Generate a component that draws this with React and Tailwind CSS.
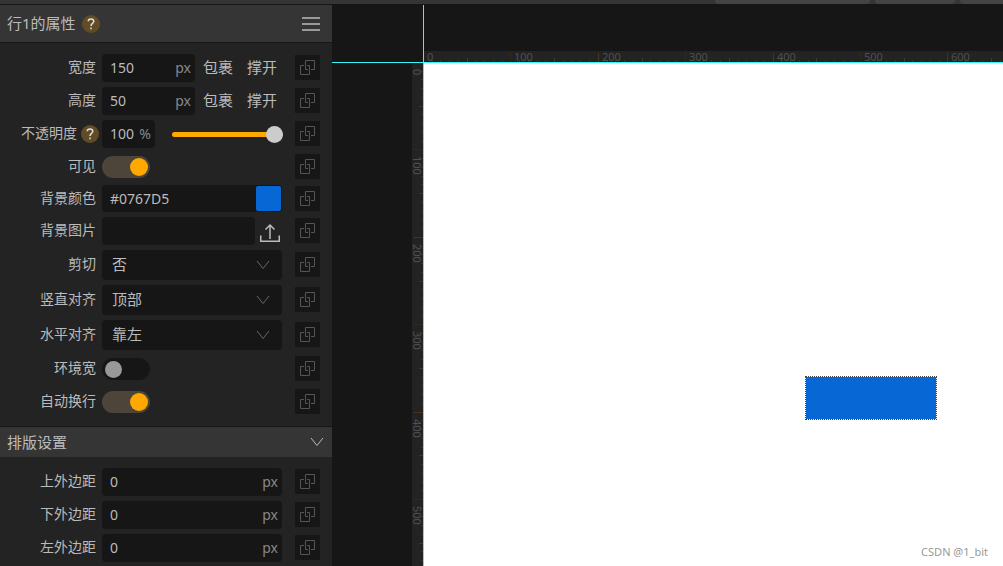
import { useState } from 'react'
import clsx from 'clsx'

const RULER_STEP = 87.4

const RULER_TICKS = Array.from({ length: 70 }, (_, i) => i + 1)

const MARGINS = [
  { id: 'margin-top', label: '上外边距' },
  { id: 'margin-bottom', label: '下外边距' },
  { id: 'margin-left', label: '左外边距' }
]

function LinkButton({ label, className = 'ml-[13px]' }) {
  return (
    <button type="button" aria-label={`${label} 绑定`} className={clsx('mb-px size-[25px] shrink-0 bg-[#161616]', className)}>
      <svg width="25" height="25" viewBox="0 0 25 25" fill="none" stroke="#555" aria-hidden="true">
        <path d="M13 14.5H10.5V5.5H19.5V14.5H16" />
        <path d="M9 10.5H5.5V19.5H14.5V10.5H12" />
      </svg>
    </button>
  )
}

function Chevron({ className }) {
  return (
    <svg width="14" height="10" viewBox="0 0 14 10" fill="none" stroke="currentColor" className={className} aria-hidden="true">
      <path d="M1 1L7 8.500L13 1" />
    </svg>
  )
}

function Help() {
  return (
    <button
      type="button"
      aria-label="帮助"
      className="flex size-[18px] shrink-0 items-center justify-center rounded-full bg-[#624c26]"
    >
      <svg width="18" height="18" viewBox="0 0 18 18" fill="none" stroke="#ddd" strokeWidth="1.5" aria-hidden="true">
        <path d="M6.200 6.300C6.200 4.800 7.400 3.900 9 3.900C10.700 3.900 11.800 4.900 11.800 6.300C11.800 8.400 9 8.500 9 11" />
        <path d="M9 12.500V14.200" />
      </svg>
    </button>
  )
}

function Row({ id, label, className = 'h-7', children }) {
  return (
    <div className={clsx('flex items-center pr-3', className)}>
      <label htmlFor={id} className="w-24 shrink-0 pb-0.5 text-right text-sm leading-5">
        {label}
      </label>
      <div className="ml-1.5 flex h-full min-w-0 flex-1 items-center">{children}</div>
      <LinkButton label={label} />
    </div>
  )
}

function Field({ id, unit, value, className }) {
  return (
    <div className={clsx('flex h-full items-center rounded bg-[#161616] pr-1 pl-2', className)}>
      <input
        id={id}
        type="text"
        defaultValue={value}
        className="w-full min-w-0 flex-1 bg-transparent text-sm text-[#bbb] outline-none"
      />
      {unit && <span className="text-sm text-[#888]">{unit}</span>}
    </div>
  )
}

function Select({ id, options }) {
  return (
    <div className="relative h-full w-full">
      <select
        id={id}
        className="h-full w-full appearance-none rounded bg-[#161616] px-2.5 pb-0.5 text-[15px] text-[#bbb] outline-none"
      >
        {options.map((o) => (
          <option key={o}>{o}</option>
        ))}
      </select>
      <Chevron className="pointer-events-none absolute top-2.5 right-3 text-[#666]" />
    </div>
  )
}

function Toggle({ id, on }) {
  const [checked, setChecked] = useState(on)
  return (
    <input
      id={id}
      type="checkbox"
      role="switch"
      checked={checked}
      onChange={(e) => setChecked(e.target.checked)}
      className="flex h-[22px] w-12 appearance-none items-center rounded-full bg-[#161616] px-[3px] before:size-[17px] before:rounded-full before:bg-[#999] checked:justify-end checked:bg-[#4d4539] checked:px-0.5 checked:before:size-[18px] checked:before:bg-[#ffa800]"
    />
  )
}

function SizeRow({ id, label, value }) {
  return (
    <Row id={id} label={label}>
      <Field id={id} value={value} unit="px" className="w-[93px]" />
      <button type="button" className="ml-2 pb-0.5 text-[15px]">包裹</button>
      <button type="button" className="ml-3.5 pb-0.5 text-[15px]">撑开</button>
    </Row>
  )
}

function PropertyPanel() {
  return (
    <aside className="w-[332px] shrink-0 bg-[#232323]">
      <header className="flex h-[38px] items-center border-b border-[#161616] bg-[#353535] pr-3 pl-[7px]">
        <h2 className="mr-1.5 text-[15px]">行1的属性</h2>
        <Help />
        <button type="button" aria-label="菜单" className="ml-auto flex w-[18px] flex-col gap-1">
          <span className="h-0.5 w-full bg-[#999]" />
          <span className="h-0.5 w-full bg-[#999]" />
          <span className="h-0.5 w-full bg-[#999]" />
        </button>
      </header>

      <div className="flex flex-col gap-[5px] pt-[11px] pb-2.5">
        <SizeRow id="width" label="宽度" value="150" />
        <SizeRow id="height" label="高度" value="50" />
        <div className="flex h-7 items-center pr-3">
          <label htmlFor="opacity" className="w-[77px] shrink-0 pb-0.5 text-right text-sm leading-5">不透明度</label>
          <div className="ml-1">
            <Help />
          </div>
          <Field id="opacity" value="100" unit="%" className="ml-[3px] w-[53px]" />
          <input
            type="range"
            aria-label="不透明度"
            defaultValue="100"
            className="ml-[17px] h-[17px] min-w-0 flex-1 appearance-none bg-transparent [&::-webkit-slider-runnable-track]:h-[5px] [&::-webkit-slider-runnable-track]:rounded-full [&::-webkit-slider-runnable-track]:bg-[#ffa800] [&::-webkit-slider-thumb]:-mt-1.5 [&::-webkit-slider-thumb]:size-[17px] [&::-webkit-slider-thumb]:appearance-none [&::-webkit-slider-thumb]:rounded-full [&::-webkit-slider-thumb]:bg-[#ccc]"
          />
          <LinkButton label="不透明度" className="ml-3" />
        </div>
        <Row id="visible" label="可见" className="h-[27px]">
          <Toggle id="visible" on />
        </Row>
        <Row id="bg-color" label="背景颜色" className="h-[27px]">
          <div className="flex h-full w-full items-center rounded bg-[#161616] pr-px">
            <Field id="bg-color" value="#0767D5" className="min-w-0 flex-1" />
            <input
              type="color"
              aria-label="选择颜色"
              defaultValue="#0767d5"
              className="size-[25px] shrink-0 appearance-none [&::-webkit-color-swatch]:rounded-xs [&::-webkit-color-swatch]:border-0 [&::-webkit-color-swatch-wrapper]:p-0"
            />
          </div>
        </Row>
        <Row id="bg-image" label="背景图片">
          <Field id="bg-image" value="" className="min-w-0 flex-1" />
          <button type="button" aria-label="上传图片" className="mt-1 mr-0.5 ml-[5px]">
            <svg width="20" height="20" viewBox="0 0 20 20" fill="none" stroke="#bbb" strokeWidth="1.5">
              <path d="M0.750 12.500V18.250H19.250V12.500" />
              <path d="M10 16V2M5.500 6.500L10 2L14.500 6.500" />
            </svg>
          </button>
        </Row>
        <Row id="clip" label="剪切" className="h-[30px]">
          <Select id="clip" options={['否', '是']} />
        </Row>
        <Row id="v-align" label="竖直对齐" className="h-[30px]">
          <Select id="v-align" options={['顶部', '居中', '底部']} />
        </Row>
        <Row id="h-align" label="水平对齐" className="h-[30px]">
          <Select id="h-align" options={['靠左', '居中', '靠右']} />
        </Row>
        <Row id="env-width" label="环境宽">
          <Toggle id="env-width" on={false} />
        </Row>
        <Row id="auto-wrap" label="自动换行">
          <Toggle id="auto-wrap" on />
        </Row>
      </div>

      <button
        type="button"
        className="flex h-8 w-full items-center justify-between border-y border-t-[#161616] border-b-[#232323] bg-[#353535] pr-2 pl-[7px] text-[15px]"
      >
        排版设置
        <Chevron className="text-[#bbb]" />
      </button>

      <div className="flex flex-col gap-[5px] pt-2.5 pb-1">
        {MARGINS.map(({ id, label }) => (
          <Row key={id} id={id} label={label}>
            <Field id={id} value="0" unit="px" className="w-full" />
          </Row>
        ))}
      </div>
    </aside>
  )
}

// One ruler mark: amber on every 100, a longer grey one on every 50
function tickStyle(i) {
  if (i % 20 === 0) return { size: 9, color: '#493618' }
  if (i % 10 === 0) return { size: 10, color: '#33291a' }
  if (i % 5 === 0) return { size: 4, color: '#393939' }
  return { size: 2, color: '#343434' }
}

function HorizontalRuler() {
  return (
    <svg className="block h-[11px] w-full overflow-visible bg-[#232323]" aria-hidden="true">
      {RULER_TICKS.map((i) => {
        const { size, color } = tickStyle(i)
        return <rect key={i} x={Math.round((i * RULER_STEP) / 10) - 1} y={11 - size} width="1" height={size} fill={color} />
      })}
      {[0, 100, 200, 300, 400, 500, 600].map((n) => (
        <text key={n} x={Math.round((n / 100) * RULER_STEP) + 3} y="10" fontSize="11" fill="#505050">
          {n}
        </text>
      ))}
    </svg>
  )
}

function VerticalRuler() {
  return (
    <svg className="block h-full w-[11px] overflow-visible bg-[#232323]" aria-hidden="true">
      {RULER_TICKS.map((i) => {
        const { size, color } = tickStyle(i)
        return <rect key={i} x={11 - size} y={Math.round((i * RULER_STEP) / 10) - 1} width={size} height="1" fill={color} />
      })}
      {[0, 100, 200, 300, 400, 500].map((n) => (
        <text
          key={n}
          transform={`translate(1 ${Math.round((n / 100) * RULER_STEP) + 6}) rotate(90)`}
          fontSize="11"
          fill="#505050"
        >
          {n}
        </text>
      ))}
    </svg>
  )
}

function Stage() {
  return (
    <main className="grid min-w-0 flex-1 grid-cols-[80px_11px_1px_1fr] grid-rows-[46px_11px_1px_1fr] bg-[#161616]">
      <div className="col-start-4 row-start-2 min-w-0">
        <HorizontalRuler />
      </div>
      <div className="col-start-2 row-start-4 min-h-0">
        <VerticalRuler />
      </div>
      <div className="relative col-start-4 row-start-4 overflow-hidden bg-white">
        <div className="absolute top-[313px] left-[381px] h-11 w-[132px] border border-dotted border-[#444] bg-[#0767d5] bg-clip-padding" />
        <span className="absolute right-[15px] bottom-1.5 text-[11px] leading-4 text-[#999]">CSDN @1_bit</span>
      </div>
      {/* Guides */}
      <div className="col-span-4 col-start-1 row-start-3 bg-[#35f5f9]" />
      <div className="col-start-3 row-span-4 row-start-1 bg-[#35f5f9]" />
    </main>
  )
}

export default function App() {
  return (
    <div className="flex h-screen flex-col overflow-hidden bg-[#161616] font-['Noto_Sans','Noto_Sans_CJK_SC',sans-serif] text-[#bbb]">
      <div className="flex h-[5px] shrink-0 gap-[5px] border-b border-[#161616] bg-[#353535] pl-[715px]">
        <div className="w-[155px] shrink-0 rounded-b-sm bg-[#444]" />
        <div className="w-20 shrink-0 rounded-b-sm bg-[#444]" />
        <div className="min-w-0 flex-1 rounded-bl-sm bg-[#444]" />
      </div>
      <div className="flex min-h-0 flex-1">
        <PropertyPanel />
        <Stage />
      </div>
    </div>
  )
}
